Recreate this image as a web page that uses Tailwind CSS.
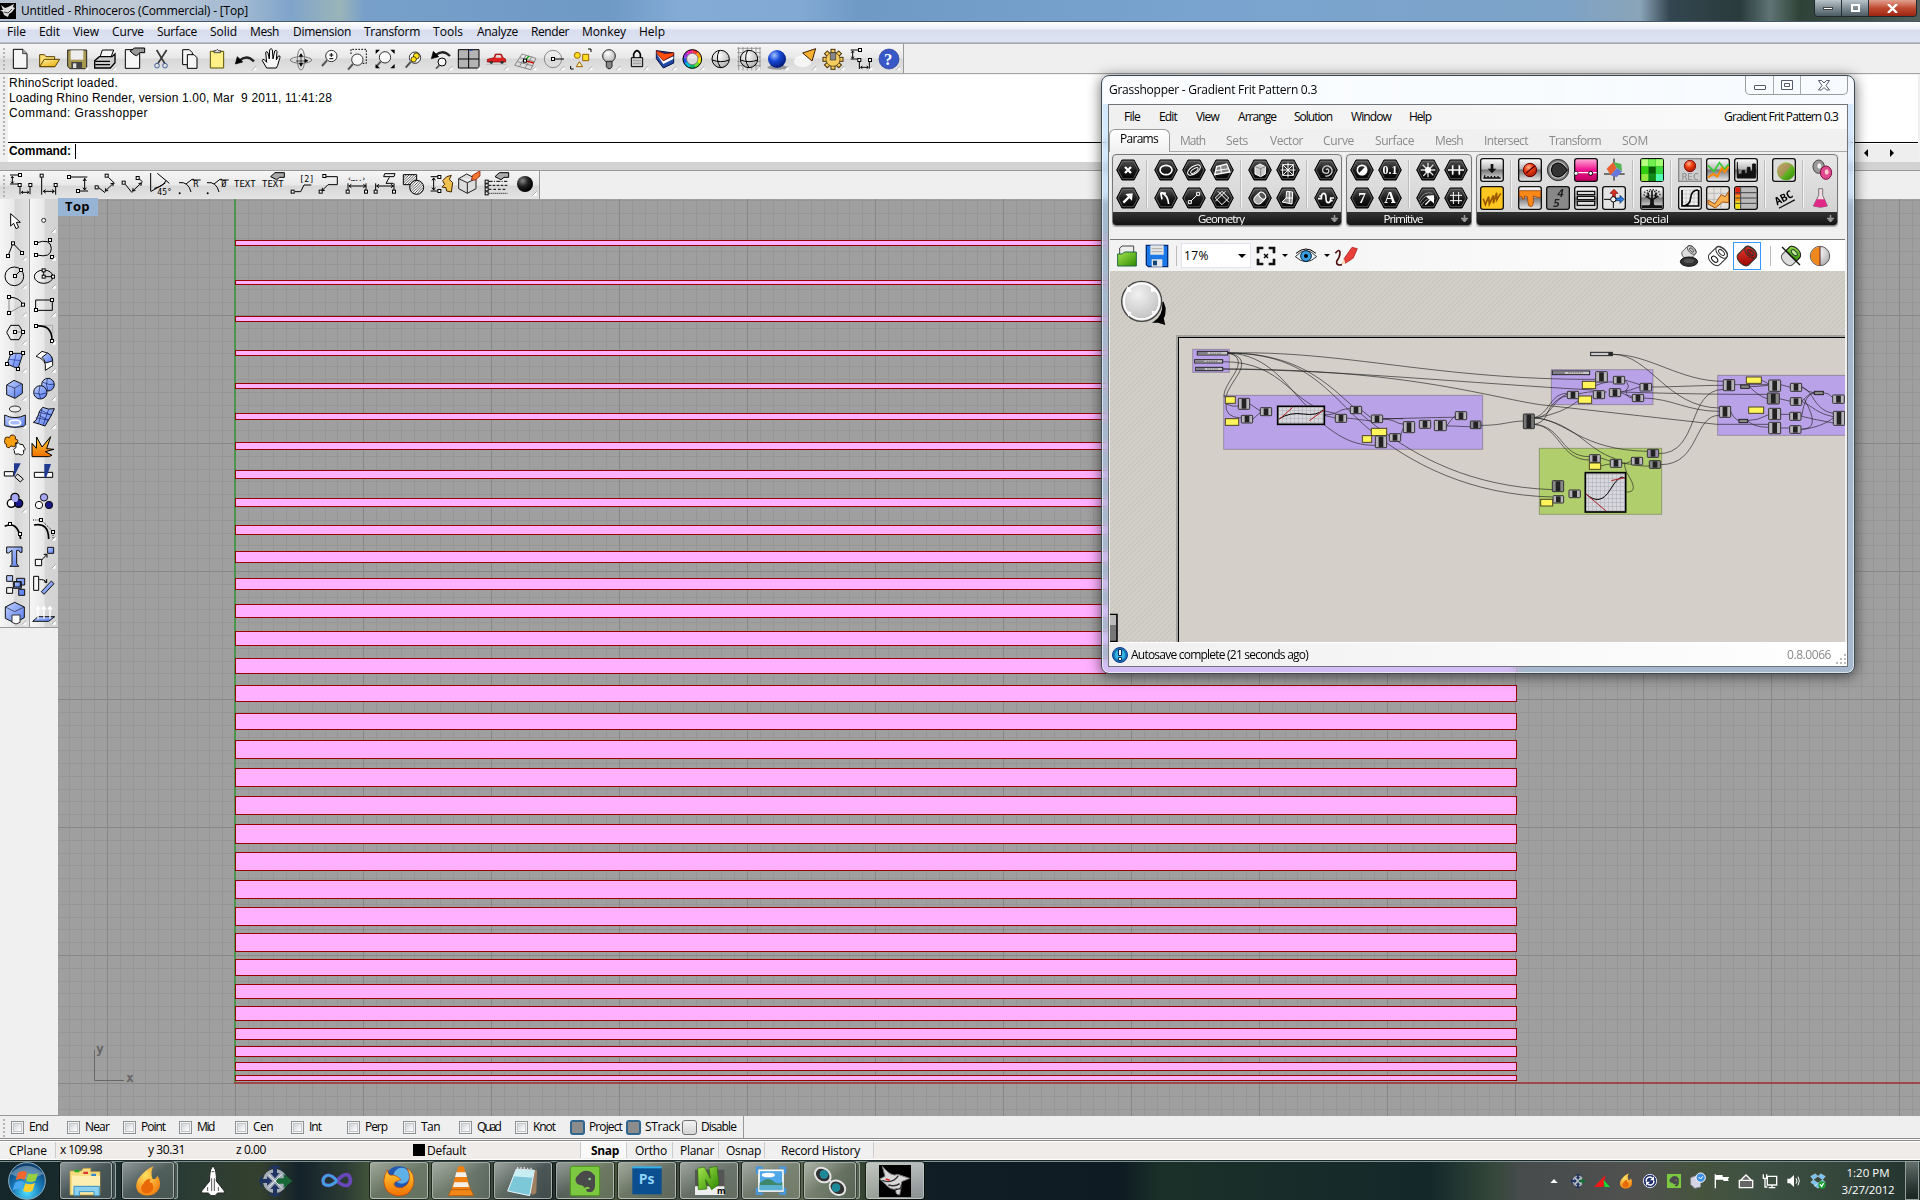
<!DOCTYPE html>
<html lang="en">
<head>
<meta charset="utf-8">
<title>Untitled - Rhinoceros (Commercial) - [Top]</title>
<script src="https://cdn.jsdelivr.net/npm/@tailwindcss/browser@4"></script>
</head>
<body class="w-[1920px] h-[1200px] overflow-hidden bg-[#efefef] font-['Open_Sans','Noto_Sans',sans-serif] text-[12px] text-black relative">
<svg class="absolute w-0 h-0"><defs>
<linearGradient id="gy" x2="1" y2="1"><stop offset="0" stop-color="#fff3a0"/><stop offset="1" stop-color="#e8a800"/></linearGradient>
<linearGradient id="gb" x2="1" y2="1"><stop offset="0" stop-color="#c4d2ff"/><stop offset="1" stop-color="#5278ee"/></linearGradient>
<linearGradient id="go" x2="0" y2="1"><stop offset="0" stop-color="#ffcf3a"/><stop offset="1" stop-color="#f07000"/></linearGradient>
<linearGradient id="hx" x2="0" y2="1"><stop offset="0" stop-color="#555"/><stop offset=".5" stop-color="#1c1c1c"/><stop offset="1" stop-color="#000"/></linearGradient>
<linearGradient id="gg" x2="0" y2="1"><stop offset="0" stop-color="#fff"/><stop offset=".45" stop-color="#bbb"/><stop offset=".5" stop-color="#777"/><stop offset="1" stop-color="#eee"/></linearGradient>
<linearGradient id="pk" x2="0" y2="1"><stop offset="0" stop-color="#ffb0d8"/><stop offset=".5" stop-color="#f01090"/><stop offset="1" stop-color="#c00060"/></linearGradient>
<radialGradient id="rb" cx=".35" cy=".3" r=".8"><stop offset="0" stop-color="#a0c4ff"/><stop offset=".4" stop-color="#1848d8"/><stop offset="1" stop-color="#001060"/></radialGradient>
<radialGradient id="rw" cx=".4" cy=".3" r=".8"><stop offset="0" stop-color="#fff"/><stop offset="1" stop-color="#a8a8a8"/></radialGradient>
<radialGradient id="rk" cx=".35" cy=".3" r=".7"><stop offset="0" stop-color="#888"/><stop offset=".5" stop-color="#222"/><stop offset="1" stop-color="#000"/></radialGradient>
<radialGradient id="rr" cx=".4" cy=".3" r=".8"><stop offset="0" stop-color="#ffb090"/><stop offset=".4" stop-color="#ee4010"/><stop offset="1" stop-color="#901000"/></radialGradient>
<radialGradient id="ro" cx=".4" cy=".3" r=".8"><stop offset="0" stop-color="#ffe060"/><stop offset="1" stop-color="#f07808"/></radialGradient>
<radialGradient id="rs" cx=".5" cy=".8" r=".8"><stop offset="0" stop-color="#50e0ff"/><stop offset=".5" stop-color="#1878b8"/><stop offset="1" stop-color="#0a3460"/></radialGradient>
<linearGradient id="rd" x2="1" y2="1"><stop offset="0" stop-color="#f04030"/><stop offset="1" stop-color="#900000"/></linearGradient>
<linearGradient id="gr" x2="1" y2="1"><stop offset="0" stop-color="#a8e850"/><stop offset="1" stop-color="#2c8800"/></linearGradient>
<pattern id="hatch" width="5" height="5" patternUnits="userSpaceOnUse"><rect width="5" height="5" fill="#d1cec7"/><path d="M-1 1L1 -1M0 5L5 0M4 6L6 4" stroke="#c6c3bb" stroke-width="1"/></pattern>
<pattern id="gp" width="12" height="12" patternUnits="userSpaceOnUse"><rect width="12" height="12" fill="#d6d6dc"/><path d="M0 0H12M0 0V12" stroke="#aaaab4" stroke-width="3"/></pattern>
<pattern id="diag" width="8" height="8" patternUnits="userSpaceOnUse"><rect width="8" height="8" fill="#fff"/><path d="M0 8L8 0M-2 2L2 -2M6 10L10 6" stroke="#000" stroke-width="2"/></pattern>
</defs></svg>

<div class="flex flex-col w-full h-full">
<!-- title bar -->
<header class="h-[21px] flex items-start bg-[linear-gradient(90deg,#b4c2d2_0px,#c0cad6_130px,#a3bad2_240px,#7fa4ca_290px,#9ab4b8_340px,#779fca_365px,#6f9ac6_610px,#84abd6_680px,#82a9d4_800px,#6f9ac6_860px,#7aa4d0_1200px,#7da3c8_1560px,#8aa4b8_1640px,#33454f_1670px,#2a3b3c_1740px,#5f7475_1770px,#2f4237_1800px,#51605c_1920px)]">
<svg class="w-4 h-4 mt-[3px]" viewBox="0 0 16 16"><path fill="#000" d="M0 0h16v16H0z"/><path fill="#ddd" d="M1 2l4 3 3-1 6-3-1 3 2 1-3 4-3 2-1 3-4-2-1-3-3-2 3 0z"/><path d="M4 9l4 1 4-4" stroke="#444" fill="none"/></svg>
<span class="ml-[5px] mt-[1px] leading-[19px] whitespace-pre" data-w="226">Untitled - Rhinoceros (Commercial) - [Top]</span>
<div class="ml-auto mr-[3px] flex h-[17px] border border-t-0 border-[#1e2a30] rounded-b-[4px] overflow-hidden divide-x divide-[#26333a]">
<div class="w-[27px] bg-gradient-to-b from-[#b9c3ca] to-[#4c5c62] flex justify-center items-center"><i class="w-[10px] h-[3px] bg-white border border-[#444]"></i></div>
<div class="w-[27px] bg-gradient-to-b from-[#b9c3ca] to-[#4c5c62] flex justify-center items-center"><i class="w-[9px] h-[8px] border-2 border-white"></i></div>
<div class="w-[47px] bg-gradient-to-b from-[#e0a090] via-[#c04a30] to-[#9c2410] flex justify-center items-center"><svg class="w-[11px] h-[9px]" viewBox="0 0 11 9"><path d="M1 0l9 9M10 0L1 9" stroke="#fff" stroke-width="2.4"/></svg></div>
</div>
</header>
<!-- menu -->
<nav class="h-[22px] border-t border-[#45566b] bg-[linear-gradient(180deg,#fff_0,#eceff8_7px,#d8deef_8px,#dde2f3_18px)] border-b border-b-[#b9bfd0] relative flex" id="menu"></nav>
<!-- main tools -->
<div class="h-[31px] border-t border-b border-[#a5a5a5] bg-[#efefef] flex">
<div class="flex w-[904px] border-r border-[#999] bg-[linear-gradient(180deg,#f6f6f6_0,#e8e8e8_14px,#d8d8d8_15px,#e4e4e4_29px)]">
<div class="w-[6px] flex flex-col gap-[2px] pt-[4px] pl-[3px] grip"></div><div id="tb1" class="flex"></div></div></div>
<!-- command history -->
<section class="h-[88px] bg-[#f0f0f0] flex pt-px">
<div class="w-[8px] pl-[3px] pt-[2px] flex flex-col gap-[2px] grip"></div>
<div class="w-[1910px] h-[87px] flex flex-col bg-white font-['Liberation_Sans',Arial,sans-serif]">
<div class="h-[68px] pl-px pt-px whitespace-pre leading-[15px] border-b border-black"><p><span data-w="108">RhinoScript loaded.</span></p><p><span data-w="322">Loading Rhino Render, version 1.00, Mar  9 2011, 11:41:28</span></p><p><span data-w="138">Command: Grasshopper</span></p></div>
<div class="flex h-[19px] items-start pt-px"><b class="pl-px leading-[14px] whitespace-pre"><span data-w="61">Command:</span></b><i class="ml-[4px] w-px h-[15px] bg-black"></i>
<div class="ml-auto w-[62px] h-[18px] bg-[#eee] flex items-center gap-[22px] pl-[8px]"><i class="border-y-4 border-y-transparent border-r-4 border-r-black"></i><i class="border-y-4 border-y-transparent border-l-4 border-l-black"></i></div></div>
</div></section>
<div class="h-[8px] bg-[#d2d2d2]"></div>
<!-- dimension tools -->
<div class="h-[29px] border-t border-[#999] bg-[#efefef] flex">
<div class="flex w-[540px] border-r border-[#999] bg-[linear-gradient(180deg,#f6f6f6_0,#e8e8e8_14px,#d8d8d8_15px,#e4e4e4_28px)]"><div class="w-[7px] flex flex-col gap-[2px] pt-[4px] pl-[3px] grip"></div><div id="tb2" class="flex"></div></div></div>
<!-- workspace -->
<main class="h-[917px] flex">
<aside class="w-[58px] flex flex-col bg-[#f0f0f0]">
<div class="h-[429px] flex border-b border-[#999]">
<div class="w-[30px] pt-[8px] border-r border-[#999] bg-[linear-gradient(90deg,#f6f6f6_0,#e8e8e8_14px,#d6d6d6_15px,#e2e2e2_29px)]"><div id="lt0" class="flex flex-col"></div></div>
<div class="w-[28px] pt-[8px] bg-[linear-gradient(90deg,#f6f6f6_0,#e8e8e8_14px,#d6d6d6_15px,#d2d2d2_28px)]"><div id="lt1" class="flex flex-col"></div></div>
</div><div class="mt-auto border-t border-[#999]"></div></aside>
<div class="w-[1862px] h-[917px] relative bg-[#9f9f9f]"><svg id="vp" class="block w-full h-full" viewBox="58 199 1862 917"></svg>
<b class="absolute left-0 -top-px w-[40px] h-[18px] bg-[#98b4d4] text-[13px] leading-[16px] pl-[7px]"><span data-w="24">Top</span></b></div>
</main>
<!-- object snaps -->
<div class="h-[23px] bg-[#efefef] border-b border-[#8c8c8c] flex"><div class="w-[744px] border-r border-[#999] flex items-center"><div class="w-[11px] h-full flex flex-col gap-[2px] pt-[3px] pl-[3px] grip"></div><div id="osnap" class="flex items-center"></div></div></div>
<div class="h-px bg-[#fafafa]"></div><div class="h-[2px] border-t border-[#8c8c8c] bg-white"></div>
<div class="h-[18px] bg-[#f0ecea] flex items-center whitespace-pre border-b border-white pb-px">
<span class="w-[56px] h-full border-r border-[#ccc] pl-[9px] bg-[#f0f0f0]"><span data-w="37">CPlane</span></span>
<span class="w-[88px] pl-[4px]"><span data-w="41">x 109.98</span></span><span class="w-[88px] pl-[4px]"><span data-w="36">y 30.31</span></span><span class="w-[177px] pl-[4px]"><span data-w="29">z 0.00</span></span>
<i class="ml-[4px] w-[12px] h-[12px] bg-black"></i><span class="pl-[2px] w-[156px] h-full border-r border-[#ccc]"><span data-w="38">Default</span></span>
<b class="w-[46px] h-full bg-[#fafafa] border-r border-[#ccc] pl-[10px]"><span data-w="27">Snap</span></b><span class="w-[46px] h-full border-r border-[#ccc] bg-[#f0f0f0] pl-[8px]"><span data-w="31">Ortho</span></span><span class="w-[46px] h-full border-r border-[#ccc] bg-[#f0f0f0] pl-[7px]"><span data-w="33">Planar</span></span><span class="w-[46px] h-full border-r border-[#ccc] bg-[#f0f0f0] pl-[7px]"><span data-w="34">Osnap</span></span><span class="w-[109px] h-full border-r border-[#ccc] bg-[#f0f0f0] pl-[16px]"><span data-w="78">Record History</span></span>
</div>
<!-- taskbar -->
<footer class="h-[40px] border-t border-[#1c2a2c] shadow-[inset_0_1px_0_#7c9090] flex items-center bg-[linear-gradient(90deg,#15262a_0,#1d2e30_110px,#2a3c34_190px,#34402e_260px,#14222a_300px,#2b3b33_345px,#42533a_370px,#4d5c4a_460px,#1e2b2c_545px,#49583c_600px,#3e4a40_700px,#5a6650_800px,#32412f_870px,#101d24_930px,#0e1b22_1120px,#1b3028_1160px,#14282a_1430px,#35483a_1495px,#474b4c_1520px,#50514f_1640px,#46543e_1700px,#3e5042_1760px,#33443a_1850px,#20302c_1920px)]">
<svg class="w-[40px] h-[38px] ml-[7px] mr-[11px]" viewBox="-60 -57 120 114"><circle r="55" fill="url(#rs)" stroke="#8fb4c8" stroke-width="3"/><path d="M-50-22Q0-70 50-22Q20-6 0-6T-50-22z" fill="#fff" opacity=".3"/><path d="M-27-25q14-9 27-1l-7 23q-13-8-27 1z" fill="#f06830"/><path d="M4-23q13 6 29-1l-7 23q-14 7-29 1z" fill="#98d040"/><path d="M-36 5q14-9 27-1l-7 23q-13-8-27 1z" fill="#48a8f0"/><path d="M-5 7q13 6 29-1l-7 23q-14 7-29 1z" fill="#ffd030"/></svg>
<div id="tasks" class="flex h-full"></div>
<div id="tray" class="ml-auto flex items-center"></div>
<div class="w-[74px] ml-px text-white text-center text-[11.5px] leading-[17px]"><p><span data-w="42">1:20 PM</span></p><p><span data-w="52">3/27/2012</span></p></div>
<i class="w-[14px] h-full border border-[#93a09a] bg-gradient-to-b from-white/30 to-black/20 mr-px"></i>
</footer>
</div>

<!-- Grasshopper window -->
<div class="absolute left-[1101px] top-[75px] w-[754px] h-[599px] rounded-[8px] border border-[#3f4a52] shadow-[0_2px_14px_rgba(0,0,0,.6),inset_0_0_0_1px_rgba(255,255,255,.6)] backdrop-blur-[4px] bg-[#b0d6fb]/50">
<div class="flex flex-col h-full">
<div class="h-[27px] mx-px mt-px rounded-t-[6px] flex bg-gradient-to-r from-white/90 via-white/85 to-white/80"><span class="ml-[6px] mt-[4px]" data-w="207">Grasshopper - Gradient Frit Pattern 0.3</span>
<div class="ml-auto mr-[5px] w-[103px] h-[19px] -mt-px border border-t-0 border-[#9b9b9b] rounded-b-[5px] flex divide-x divide-[#aaa]">
<div class="w-[28px] flex justify-center items-end pb-[4px]"><i class="w-[12px] h-[5px] border border-[#555a6a] rounded-[1px] bg-white"></i></div>
<div class="w-[27px] flex justify-center items-center"><svg class="w-[12px] h-[11px]" viewBox="0 0 12 11"><path d="M.5.5h11v9H.5zM3.5 3.5h5v3h-5z" fill="#fff" stroke="#555a6a"/></svg></div>
<div class="grow flex justify-center items-center"><svg class="w-[12px] h-[11px]" viewBox="0 0 12 11"><path d="M.5.5h3L6 3 8.500.5h3L8 5.500l3.500 4.500h-3L6 7.500 3.500 10h-3L4 5.500z" fill="#fff" stroke="#555a6a"/></svg></div>
</div></div>
<div class="mx-[6px] mb-[6px] grow border border-[#707478] bg-[#f0f0f0] flex flex-col overflow-hidden">
<div class="h-[24px] bg-gradient-to-r from-[#f0f0f0] to-[#fbfbfb] relative flex items-center" id="ghmenu"></div>
<div class="h-[23px] flex border-b border-[#a8a8a8] text-[#8a8a8a] items-end"><div class="w-[61px] h-[23px] -mb-px bg-gradient-to-b from-white to-[#f0f0f0] border border-b-0 border-[#999] rounded-t-[6px] text-black pl-[10px] leading-[18px]"><span data-w="37">Params</span></div><div id="ghtabs" class="flex h-[20px] grow"></div></div>
<div class="h-[87px] flex gap-[4px] pt-[2px] pl-[3px] bg-[#f0f0f0]" id="ribbon"></div>
<div class="h-[32px] border-t border-[#777] ml-px bg-gradient-to-r from-[#f2f2f2] to-white flex items-center mr-[2px]" id="ghtools"></div>
<svg id="canvas" class="ml-px mr-[2px] w-[735px] h-[371px] shrink-0" viewBox="1110 271 735 371"></svg>
<div class="h-[24px] pt-px shrink-0 bg-gradient-to-r from-[#f0f0f0] to-white border-t border-white flex items-center"><svg class="w-[16px] h-[16px] ml-[3px]" viewBox="0 0 16 16"><circle cx="8" cy="8" r="7.500" fill="#1478b8" stroke="#123a90"/><circle cx="8" cy="8" r="5" fill="#38b8e0"/><path d="M6.500 2.500h3v6h-3zM6.500 10.500h3v3h-3z" fill="#fff" stroke="#102a60"/></svg><span class="ml-[3px]" data-w="176">Autosave complete (21 seconds ago)</span><span class="ml-auto mr-[4px] text-[#8a8a8a]" data-w="43">0.8.0066</span><svg class="w-[11px] h-[11px] mt-[8px] mr-px" viewBox="0 0 11 11"><path d="M9 0h2v2H9zM9 4h2v2H9zM9 8h2v2H9zM5 4h2v2H5zM5 8h2v2H5zM1 8h2v2H1z" fill="#bbb"/></svg></div>
</div></div></div>

<script>
const $=id=>document.getElementById(id);
const svg=(cls,vb,s)=>`<svg class="${cls}" viewBox="${vb}">${s}</svg>`;
const K='fill="none" stroke="#000" stroke-width="3"', W='fill="#f6f6f6" stroke="#000" stroke-width="3"';
const p=(d,a=K)=>`<path d="${d}" ${a}/>`;
const q=(...a)=>{let s='';for(let i=0;i<a.length;i+=2)s+=`<rect x="${a[i]-4.5}" y="${a[i+1]-4.5}" width="9" height="9" fill="#fff" stroke="#000" stroke-width="3"/>`;return s};
const c=(x,y,r,a=K)=>`<circle cx="${x}" cy="${y}" r="${r}" ${a}/>`;
const el=(x,y,rx,ry,a=K)=>`<ellipse cx="${x}" cy="${y}" rx="${rx}" ry="${ry}" ${a}/>`;
const t=(x,y,s,str,a='')=>`<text x="${x}" y="${y}" font-size="${s}" font-family="DejaVu Sans Mono" ${a}>${str}</text>`;
const corner=(x,y)=>`<path d="M${x+13} ${y}V${y+13}H${x}z" fill="#fff"/><path d="M${x} ${y+13}L${x+13} ${y}" stroke="#888" stroke-width="2"/>`;
[6,20,6,5].forEach((n,k)=>{const g=document.querySelectorAll('.grip')[k];for(let i=0;i<n;i++)g.innerHTML+='<i class="block w-[2px] h-[2px] shrink-0 bg-[#b4b4b4]"></i>'});

/* menus: label, start, width */
function row(id,items,from){let x=from,h='';for(const[s,l,w]of items){h+=`<span class="shrink-0 whitespace-pre leading-[20px]" style="margin-left:${l-x}px;width:${w}px"><span data-w="${w}">${s}</span></span>`;x=l+w}$(id).innerHTML=h}
row('menu',[['File',7,18],['Edit',39,20],['View',73,25],['Curve',112,31],['Surface',157,39],['Solid',210,26],['Mesh',250,28],['Dimension',293,57],['Transform',364,55],['Tools',433,29],['Analyze',477,40],['Render',531,37],['Monkey',582,43],['Help',639,25]],0);
row('ghmenu',[['File',1124,15],['Edit',1159,17],['View',1196,22],['Arrange',1238,37],['Solution',1294,37],['Window',1351,39],['Help',1409,21],['Gradient Frit Pattern 0.3',1724,113]],1109);
row('ghtabs',[['Math',1180,24],['Sets',1226,21],['Vector',1270,32],['Curve',1323,30],['Surface',1375,38],['Mesh',1435,27],['Intersect',1484,43],['Transform',1549,51],['SOM',1622,25]],1170);

const dims=p('M1112 150h25M1112 177h28M1118 154v20M1114 158l4-5 4 5M1114 170l4 5 4-5M1138 183v24M1168 183v24M1142 202h22M1147 198l-5 4 5 4M1160 198l5 4-5 4')+q(1140,150,1138,180,1170,180);
const lens=(x,y)=>c(x,y,17,'fill="#fff" fill-opacity=".8" stroke="#333" stroke-width="3"')+p(`M${x-13} ${y+13}L${x-28} ${y+30}`,'stroke="#555" stroke-width="6" fill="none"');
const undo=p('M718 182Q740 162 762 184','fill="none" stroke="#222" stroke-width="7"')+p('M706 192L712 170 728 186z','fill="#000" stroke="#000" stroke-width="2"');
const gear=(x,y,r,f)=>{let s='';for(let i=0;i<8;i++)s+=`<rect x="${x-6}" y="${y-r}" width="12" height="${r}" transform="rotate(${i*45} ${x} ${y})" fill="${f}" stroke="#4a3000" stroke-width="3"/>`;return s+c(x,y,r*.7,`fill="${f}" stroke="#4a3000" stroke-width="2"`)};
const tb1=[
 p('M40 148h28l13 13v44H40z',W)+p('M68 148v13h13','fill="#aaa" stroke="#000" stroke-width="2"'),
 p('M119 200v-36h14l5 6h26v30z','fill="#ffe070" stroke="#5a4000" stroke-width="3"')+p('M119 200l14-22h46l-14 22z','fill="url(#gy)" stroke="#5a4000" stroke-width="3"'),
 p('M203 150h57v56h-50l-7-7z','fill="#a89850" stroke="#222" stroke-width="3"')+p('M212 151h38v28h-38z','fill="#eee"')+p('M214 186h32v20h-32z','fill="#444"')+p('M219 190h10v14h-10z','fill="#ddd"'),
 p('M299 174l8-24h34l-9 24z',W)+p('M284 182l14-12h38l9-8v26l-14 16h-47z','fill="#ccc" stroke="#000" stroke-width="4"')+p('M286 184h44M286 194h44','stroke="#000" stroke-width="4"'),
 p('M376 149h32l11 12v44h-43z',W)+p('M390 153l14-9h30v14h-14l-10 9-8-3z','fill="#999" stroke="#000" stroke-width="3"'),
 p('M470 150l24 40M500 150l-26 40','fill="none" stroke="#333" stroke-width="5"')+c(471,197,7,'fill="none" stroke="#4060a0" stroke-width="3"')+c(495,197,7,'fill="none" stroke="#4060a0" stroke-width="3"'),
 p('M548 149h20l9 9v36h-29z',W)+p('M562 164h20l9 9v32h-29z',W),
 p('M631 154h40v50h-40z','fill="#fff088" stroke="#5a5000" stroke-width="3"')+p('M642 158v-6h6q4-8 8 0h6v6z','fill="#ddd" stroke="#000" stroke-width="2"'),
 undo,
 p('M800 204l-13-22q0-6 6-3l7 8-3-30q4-6 7 2l4 18 1-28q5-6 8 0l2 28 5-24q5-5 7 1l-2 26 6-12q6-2 5 4l-7 24-4 8z',W),
 el(903,180,32,10,'fill="none" stroke="#777" stroke-width="3"')+el(903,178,11,32,'fill="none" stroke="#777" stroke-width="3"')+p('M903 164v30M888 183h30','stroke="#000" stroke-width="2"')+p('M898 169l5-8 5 8zM915 178l9 4-9 5zM898 190l5 9 5-9z','fill="#000" stroke="#000" stroke-width="2"'),
 lens(994,168)+p('M988 165h12M994 159v12M988 176h12'),
 lens(1072,179)+p('M1053 162v-14h46v42h-14','fill="none" stroke="#000" stroke-width="3" stroke-dasharray="5 4"'),
 lens(1155,172)+p('M1127 162v-13h13zM1184 162v-13h-13zM1184 192v13h-13zM1127 192v13h13z','fill="#000"'),
 lens(1245,173)+c(1249,168,9,'fill="#ffe010" stroke="#000" stroke-width="2"')+c(1241,178,8,'fill="#ffe010" stroke="#000" stroke-width="2"'),
 `<g transform="translate(588 -16)">${undo}</g>`+c(1326,186,12,W)+p('M1318 196l-10 10','stroke="#555" stroke-width="5"'),
 p('M1375 149h62v55h-62z','fill="#b4b4b4" stroke="#000" stroke-width="3"')+p('M1406 149v55M1375 177h62')+p('M1409 151h9','stroke="#2050d0" stroke-width="3"'),
 p('M22 186v-8l20-5 4-11h18l6 12 7 3v9z','fill="#e02020" stroke="#700" stroke-width="2"')+p('M49 165h12l4 8H46z','fill="#ddd"')+c(34,187,5,'fill="#333"')+c(66,187,5,'fill="#333"')+p('M18 193h62','stroke="#bbb" stroke-width="3"'),
 p('M104 196l22-34 42 13-16 34zM112 185l48 13M120 173l45 13M118 200l20-34M135 205l20-35','fill="none" stroke="#888" stroke-width="3"')+p('M135 182l12-14','stroke="#0a0" stroke-width="4"')+p('M135 182l26 7','stroke="#d00" stroke-width="4"')+q(135,182),
 c(219,177,26,'fill="none" stroke="#888" stroke-width="3"')+p('M222 177h30')+q(219,177),
 c(292,166,9,'fill="#ffe020" stroke="#a06000" stroke-width="3"')+p('M308 163h18v19h-18z','fill="#ffe020" stroke="#a06000" stroke-width="3"')+p('M298 185l10 15h-19z','fill="#fff0b0" stroke="#a06000" stroke-width="3"')+p('M324 147h9v9M272 198v9h9'),
 c(387,168,19,'fill="url(#rw)" stroke="#222" stroke-width="3"')+p('M379 184h17v16l-5 6h-7l-5-6z','fill="#888" stroke="#222" stroke-width="3"'),
 p('M461 174v-12q10-20 20 0v12','fill="none" stroke="#000" stroke-width="5"')+p('M454 173h34v27h-34z','fill="#ccc" stroke="#000" stroke-width="3"')+p('M459 182h24M459 190h24','stroke="#888" stroke-width="2"'),
 p('M529 152v24l21 28 31-15v-30z','fill="#2448a8" stroke="#001040" stroke-width="3"')+p('M530 162l20 30 30-15v-8l-30 14-20-28z','fill="#fff"')+p('M529 152l27 9 25-3v8l-31 16-19-20z','fill="#ff5010" stroke="#600" stroke-width="2"'),
 ['#f33','#f90','#ee0','#6d2','#0b6','#0bd','#25e','#93d','#e2a'].map((k,i)=>`<path d="M637 154a23 23 0 0 1 15 5.500" fill="none" stroke="${k}" stroke-width="11" transform="rotate(${i*40} 637 177)"/>`).join('')+c(637,177,28)+c(637,177,17,'fill="none" stroke="#555" stroke-width="2"'),
 c(722,177,26,'fill="url(#rw)" stroke="#000" stroke-width="3"')+p('M718 151q-14 26 4 52M697 180q25 10 51 0M722 151v0'),
 p('M772 145h70M772 158h70M772 171h70M772 184h70M772 197h70M776 141v70M789 141v70M802 141v70M815 141v70M828 141v70M840 141v70','fill="none" stroke="#777" stroke-width="2"')+c(807,177,26,'fill="url(#rw)" stroke="#000" stroke-width="3"')+p('M803 151q-14 26 4 52M782 180q25 10 51 0'),
 el(892,202,30,7,'fill="#999"')+c(891,177,27,'fill="url(#rb)"'),
 el(968,184,26,18,'fill="#fff" fill-opacity=".7"')+p('M968 159l39-13-11 37z','fill="#f8b030" stroke="#402000" stroke-width="3"'),
 gear(1059,178,30,'#f4cc60')+p('M1051 158h16v22h-16z','fill="#888" stroke="#333" stroke-width="2"'),
 dims,
 c(1227,177,30,'fill="#3858c8" stroke="#20358c" stroke-width="2"')+t(1212,196,50,'?','fill="#fff" font-weight="bold" style="font-family:Liberation Serif"')];
const has=new Set([2,3,8,15,16,17,18,19,20,21,22,23,24,26,27,28,29,30,31]);
$('tb1').innerHTML=tb1.map((s,i)=>{const x=18+84*i-(i>16?1440:0);return svg('w-[28px] h-[28px]',`${x} 132 84 84`,s+(has.has(i)?corner(x+66,198):''))}).join('');

const ar=(x,y,a)=>`<path d="M-7 -5L0 0L-7 5" ${K} transform="translate(${x} ${y}) rotate(${a})"/>`;
const hand='<path d="M812 530l13-12h28v14h-14l-9 7-8-4z" fill="#aaa" stroke="#000" stroke-width="3"/>';
const tb2=[
 p('M30 525h25M30 552h28M37 529v20M33 534l4-5 4 5M33 545l4 5 4-5M60 560v23M90 560v23M64 577h22M69 573l-5 4 5 4M82 573l5 4-5 4')+q(60,525,59,555,91,555),
 p('M125 532v52M167 560v24M130 574h33')+ar(163,574,0)+ar(130,574,180)+q(125,527,167,555),
 p('M212 531h50M254 534v36M240 573h24')+ar(254,570,90)+ar(254,536,-90)+q(207,531,234,573),
 p('M325 532l19 18M295 562l20 16M315 574l25-24')+ar(340,550,-45)+ar(316,573,135)+q(320,527,290,562),
 p('M376 553l20 25M418 537l10 9M397 574l28-26')+ar(424,549,-45)+ar(398,573,135)+q(371,548,413,534),
 p('M452 519v54M452 575l44-26M472 520l36 30M463 565q28-6 35-24')+t(472,584,24,'45°'),
 p('M537 548q28-4 36 28M558 552l18-14h6')+t(580,562,26,'R')+p('M578 540h24')+c(539,580,3,'fill="#000"'),
 p('M621 548q28-4 36 28M642 552l18-14h6')+t(664,562,26,'Ø')+p('M662 540h24')+c(623,580,3,'fill="#000"'),
 t(702,562,27,'TEXT'),t(786,562,27,'TEXT')+hand,
 t(898,545,25,'[2]')+p('M885 575h17l10-20h22')+q(878,575),
 p('M978 530h34v24h-28l-18 18')+ar(966,572,135)+q(973,528,962,575),
 t(1042,544,22,'‹…..›','textLength="56"')+p('M1044 550v20M1098 550v20M1047 558h50')+ar(1097,558,0)+ar(1047,558,180)+q(1043,575,1098,575),
 p('M1154 521h31l-3 9h-31zM1168 532l-10 18h22M1127 550v20M1182 550v20M1130 558h50')+ar(1180,558,0)+ar(1130,558,180)+q(1127,575,1182,575),
 p('M1210 524h40v30h-40z','fill="url(#diag)" stroke="#000" stroke-width="3"')+c(1250,562,21,'fill="url(#diag)" stroke="#000" stroke-width="3"'),
 p('M1292 530h24M1292 573h24M1301 533v37')+ar(1301,570,90)+ar(1301,534,-90)+q(1318,531,1318,573)+p('M1328 542l12-12 14-4-6 12 10 10-4 28-14-3-2-10-12-2 8-8z','fill="#f0c050" stroke="#402800" stroke-width="3"'),
 p('M1376 536l24-14 28 14v30l-26 14-26-14zM1376 536l26 12 26-12M1402 548v32','fill="#ddd" stroke="#222" stroke-width="3"')+p('M1414 540l4-14 22-14v16l-14 12z','fill="#f07830" stroke="#800" stroke-width="2"'),
 p('M26 544h56','fill="none" stroke="#000" stroke-width="3" stroke-dasharray="12 4 3 4"')+p('M26 556h56','fill="none" stroke="#000" stroke-width="3" stroke-dasharray="8 4"')+p('M26 568h56','fill="none" stroke="#000" stroke-width="3" stroke-dasharray="8 6"')+p('M26 580h56','fill="none" stroke="#000" stroke-width="3" stroke-dasharray="3 3"')+q(20,545,20,556,20,568,20,580)+`<g transform="translate(-767 0)">${hand}</g>`,
 c(135,552,24,'fill="url(#rk)"')+corner(157,574)];
$('tb2').innerHTML=tb2.map((s,i)=>svg('w-[28px] h-[28px]',`${21+84*i-(i>16?1440:0)} 513 84 84`,s)).join('');

const B='fill="url(#gb)" stroke="#111" stroke-width="3"';
const L0=[
 p('M32 56v37l9-8 7 16 8-4-7-15h12z','fill="#fff" stroke="#000" stroke-width="3"'),
 p('M24 183l15-38 27 28')+q(24,183,39,145,66,174),
 c(43,244,28)+p('M45 243l17-17')+q(45,243,63,225),
 p('M27 306q34 2 42 24')+p('M27 306v48l42-24','fill="none" stroke="#888" stroke-width="3"')+q(27,306,27,354,69,329),
 p('M20 412l12-21h25l12 21-12 22H32z')+p('M45 411h24','stroke="#888" stroke-width="3"')+q(45,411,69,411),
 p('M33 475h36l-15 46-33-14z',B)+p('M49 475l-10 40M27 493l35 4','stroke="#2038a0" stroke-width="2" fill="none"')+q(33,474,69,474,21,507,54,522),
 p('M20 570l22-14 25 11v28l-22 15-25-11z',B)+p('M20 570l24 9 22-12M44 579v30','fill="none" stroke="#223" stroke-width="2"'),
 el(45,642,17,9,'fill="#eee" stroke="#333" stroke-width="3"')+p('M14 660q31 16 62 0v32q-31 10-62 0z',B)+el(45,683,17,8,'fill="#a8bcff" stroke="#fff" stroke-width="5"'),
 p('M16 728q8-4 12 0 2-10 12-8 10 4 6 12 12 2 6 10-8 0-6 6 0 10-8 6-6-4-10 4-12 0-8-10-10 0-4-20z','fill="#f8a010" stroke="#402000" stroke-width="3"')+p('M48 746q8-6 12 2 12-2 12 8 8 10-2 10 4 12-6 14-10-6-16-2-8-2-4-10-8-4 4-10z','fill="#fff" stroke="#111" stroke-width="3"'),
 p('M13 830h28v13H13z','fill="#fff" stroke="#000" stroke-width="3"')+p('M42 805h20l-20 40z','fill="#203a90"')+p('M44 846l9-9 17 15-9 9z','fill="#ddd" stroke="#000" stroke-width="3"'),
 c(45,907,12,'fill="#a8a8f8" stroke="#000" stroke-width="4"')+c(34,925,12,'fill="#fff" stroke="#000" stroke-width="4"')+c(56,925,12,'fill="#181888" stroke="#000" stroke-width="4"')+c(45,911,10,'fill="#a8a8f8"'),
 p('M14 994q38-18 48 38','fill="none" stroke="#000" stroke-width="5"')+q(30,987,60,1017),
 p('M20 1056h46v16h-6l-4-6h-6v40l6 8H30l6-6v-42l-10 8h-6z',B),
 p('M50 1150h24v20H50zM40 1160h24v20H40zM20 1142h18v17H20zM56 1183h18v18H56z',B)+p('M43 1161h18v15H43z',B)+p('M20 1178h18v17H20z',W),
 p('M16 1236l28-14 29 14v32l-29 16-28-14z',B)+p('M16 1236l28 14 29-14','fill="none" stroke="#223" stroke-width="2"')+p('M36 1282v-22h24v22l-12 5z','fill="#fff" stroke="#333" stroke-width="3"')];
const L1=[
 c(131,76,6,'fill="#fff" stroke="#222" stroke-width="3"'),
 p('M108 144q44-16 46 16 0 30-44 20')+q(108,144,150,135,108,180,156,186),
 el(131,245,28,20)+p('M131 226v19h28')+q(131,226,131,245,159,245),
 p('M107 315h50v31h-50z')+q(156,315,108,345),
 p('M130 391h28v24','fill="none" stroke="#aaa" stroke-width="3"')+p('M110 393q46-4 46 42','fill="none" stroke="#000" stroke-width="5"')+q(108,393,156,438),
 p('M108 484l18-15 16 5q16 8 16 26v12l-22 14v-18q-6-18-28-24z','fill="#fff" stroke="#111" stroke-width="3"')+p('M126 487l17-13q14 8 15 24l-22 6q-2-10-10-17z',B),
 c(144,569,19,B)+c(121,592,20,B)+p('M129 562q20 10 34 6M142 551q-6 20 2 36M103 594q18 8 37 0M120 573q-8 20 2 38','fill="none" stroke="#102060" stroke-width="2"'),
 p('M100 682q10-4 14-20t14-25q16 8 35 4l-10 22-18 30q-16-6-35-11z',B)+p('M107 668l40 8M116 652l40 8M126 642l-10 44M146 643l-16 46M114 660l32 16M122 645l32 16','fill="none" stroke="#102070" stroke-width="2"'),
 p('M96 785v-40l13 15 1-34 16 30 26-31-12 36 22 2-26 7 20 11-10 4z','fill="url(#go)" stroke="#000" stroke-width="3"'),
 p('M103 832h55v15h-55z','fill="#fff" stroke="#000" stroke-width="3"')+p('M133 807h20l-14 40h-6z','fill="#203a90"'),
 c(132,907,11,'fill="#a8a8f8" stroke="#111" stroke-width="3"')+c(117,930,11,'fill="#fff" stroke="#111" stroke-width="3"')+c(147,930,11,'fill="#181888" stroke="#111" stroke-width="3"'),
 p('M102 990q44-8 44 42','fill="none" stroke="#000" stroke-width="5"')+p('M99 975h24l36 34v24','fill="none" stroke="#000" stroke-width="3" stroke-dasharray="3 4"')+q(123,975,159,1011),
 p('M124 1096l16-17M131 1078h10v10')+p('M106 1093h19v19h-19z',W)+p('M143 1057h18v18h-18z',B),
 p('M101 1144h15v42h-15z',W)+p('M118 1154q16-2 22 9M132 1160l8 3V1152')+p('M124 1190l30-32 8 8-30 32z',B),
 p('M98 1279l16-14h50l-18 14z',B)+p('M114 1271v-34M132 1271v-34M150 1271v-34M108 1243l6-8 6 8M126 1243l6-8 6 8M144 1243l6-8 6 8','fill="none" stroke="#fff" stroke-width="4"')];
const side=(L,x,skip)=>L.map((s,r)=>svg('w-[28px] h-[28px]',`${x} ${36+84*r} 84 84`,s+(skip.includes(r)?'':corner(x+(x?64:66),100+84*r)))).join('');
$('lt0').innerHTML=side(L0,0,[0,8,9,11,12,13]);$('lt1').innerHTML=side(L1,90,[8,9,10,13]);

/* model viewport */
let v='',mn='',mj='';
for(let n=-14;n<132;n++){const x=235+n*12.8;if(x<58)continue;(n%10?mn+=`M${Math.round(x)+.5} 199V1116`:mj+=`M${Math.round(x)+.5} 199V1116`)}
for(let n=-3;n<70;n++){const y=1083-n*12.8;(n%10?mn+=`M58 ${Math.round(y)+.5}H1920`:mj+=`M58 ${Math.round(y)+.5}H1920`)}
v=p(mn,'stroke="#969696" fill="none"')+p(mj,'stroke="#878787" fill="none"')+p('M235 199V1083','stroke="#4a964c" stroke-width="2"')+p('M234 1083H1920','stroke="#9c4848" stroke-width="2"');
[[240,246],[280,285],[316,322],[350,356],[383,389],[413,420],[442,450],[470,479],[498,507],[525,535],[551,563],[578,590],[604,618],[631,646],[658,674],[685,702],[713,730],[740,759],[768,787],[796,815],[824,844],[852,871],[880,899],[907,926],[933,952],[959,976],[984,999],[1006,1021],[1028,1040],[1046,1057],[1062,1071],[1075,1081]].forEach(([a,b])=>v+=`<rect x="235.500" y="${a+.5}" width="1281" height="${b-a-1}" fill="#ffb0ff" stroke="#960000"/>`);
v+=p('M94.500 1050V1080.500H124','stroke="#686868" fill="none"')+t(96,1053,13,'y','fill="#666" font-weight="bold"')+t(126,1082,13,'x','fill="#666" font-weight="bold"');
$('vp').innerHTML=v;

/* snaps */
$('osnap').innerHTML=['End:18','Near:23','Point:23','Mid:16','Cen:19','Int:11','Perp:21','Tan:18','Quad:22','Knot:21'].map(s=>{const[a,w]=s.split(':');return`<span class="w-[56px] flex items-center"><i class="w-[13px] h-[13px] border border-[#8e8f8f] bg-[#f4f4f4] p-px flex"><i class="grow border border-[#c4c8cc] bg-gradient-to-br from-[#cfd3d8] to-white"></i></i><span class="ml-[5px]" data-w="${w}">${a}</span></span>`}).join('')+['Project:32','STrack:34','Disable:34'].map((s,i)=>{const[a,w]=s.split(':');return`<span class="w-[56px] flex items-center -ml-px mr-px">${i<2?'<i class="w-[15px] h-[15px] border-2 border-[#2f6690] rounded-[3px] bg-[#8c8c8c]"></i>':'<i class="w-[15px] h-[15px] border border-[#707070] rounded-[3px] bg-gradient-to-b from-[#f4f4f4] to-[#d4d4d4]"></i>'}<span class="ml-[4px]" data-w="${w}">${a}</span></span>`}).join('');

/* ribbon, every icon centred on 0,0 */
const w='fill="none" stroke="#fff" stroke-width="5"',w3='fill="none" stroke="#fff" stroke-width="3"';
const hex=s=>`<path d="M-34 0L-18 -30H18L34 0L18 30H-18z" fill="url(#hx)" stroke="#000" stroke-width="3"/><path d="M-30 0L-16 -26H16L30 0L16 26H-16z" fill="none" stroke="#777" stroke-width="2"/>`+s;
const box=(s,f='url(#gg)')=>`<rect x="-34" y="-34" width="68" height="68" rx="7" fill="${f}" stroke="#111" stroke-width="4"/>`+s;
const T=(s,x,y,z)=>`<text x="${x}" y="${y}" font-size="${z}" font-weight="bold" font-family="Liberation Serif" text-anchor="middle" fill="#fff">${s}</text>`;
const G=[['Geometry',[[hex(p('M-9-9L9 9M9-9L-9 9','stroke="#fff" stroke-width="7"')),hex(p('M-14 14L6-6','stroke="#fff" stroke-width="7"')+p('M14-14L12 8-8-12z','fill="#fff"'))],0,
 [hex(el(0,0,18,14,w)),hex(p('M-16-16Q6-10 8 18M-16-16L-12 4M-16-16L0-14',w))],
 [hex(`<g transform="rotate(-35)">${el(0,0,22,11,w3)+el(0,2,13,5,w3)}</g>`),hex(p('M-12 12L12-12',w3)+p('M-17 8h9v9h-9zM8-17h9v9H8z','fill="#333" stroke="#fff" stroke-width="3"'))],
 [hex(p('M-22 14L-16-10 14-18 24 6z','fill="#888" stroke="#fff" stroke-width="4"')+p('M-18 2L20-4M-2 10L-4-12',w3)),hex(p('M0-20L20 0 0 20-20 0zM-12-20L20 12M-20 10L10-20',w3))],0,
 [hex(p('M-15-10L0-18 16-10V12L2 20-15 12z','fill="#ccc" stroke="#fff" stroke-width="3"')+p('M-15-10L2-4 16-10M2-4V20','fill="none" stroke="#666" stroke-width="2"')),hex(`<g transform="rotate(45)">${`<rect x="-13" y="-18" width="26" height="38" rx="12" fill="#aaa" stroke="#fff" stroke-width="3"/>`+el(0,-10,12,8,'fill="#555" stroke="#fff" stroke-width="3"')}</g>`)],
 [hex(p('M-16-16h32v32h-32zM-22 0h44M0-22V22M-16-16L16 16M16-16L-16 16',w3)),hex(p('M-4-20L14-18 12 18-18 12-6 0zM-6 0L14 0M4-18V14','fill="#888" stroke="#fff" stroke-width="3"'))],0,
 [hex(p('M0 0q4-6 8 0 2 10-8 10-12-2-10-12 4-12 16-10 14 4 12 18-6 14-20 12','fill="none" stroke="#ccc" stroke-width="4"')),hex(p('M-24 2h10q0-16 7-16t7 14 7 14 7-14h10M-20-6h8M12 8h8',w))]]],
 ['Primitive',[[hex(c(0,0,14,w)+p('M-11 11A15 15 0 0 0 11-11z','fill="#fff"')),hex(T('7',0,16,46))],[hex(T('0.1',0,12,36)),hex(T('A',0,16,48))],0,
 [hex(p('M0-22V22M-22 0H22M-16-16L16 16M16-16L-14 18','fill="none" stroke="#ddd" stroke-width="4"')+c(0,0,9,'fill="#fff"')),hex(p('M-26 6q14-28 40-20M-24 14q16-28 40-20M-20 22q18-28 40-20','fill="none" stroke="#888" stroke-width="3"')+p('M-8 20L8 4M16-6v18L-2-4z','fill="#fff" stroke="#fff" stroke-width="4"'))],
 [hex(p('M-24 0H24M-10-14V14M10-14V14',w)),hex(p('M-8-18V18M8-18V18M-18-8H18M-18 8H18',w3))]]],
 ['Special',[[box(p('M-26 24h52M-22 16v8M-12 18v8M-2 18v8M8 18v8M18 18v8','stroke="#111" stroke-width="4"')+p('M-4-18h8V-4h9L0 10-13-4h9z','fill="#111"')),box(p('M-26 2L-20 20-10-4-8 18 4-8 4 16 14-16 14 6 26-14','fill="none" stroke="#9a5800" stroke-width="5"'),'#ffc820')],0,
 [box(c(0,0,20,'fill="url(#rr)" stroke="#600" stroke-width="3"')+p('M-12 10L14-12','stroke="#500" stroke-width="4"')),box(p('M-32-22H32V-2Q22 0 18-4L10-6Q12 24 4 26-6 26-6 14L-8-4-16-6Q-16 6-22 4L-24-4-32-4z','fill="#f88818" stroke="#903000" stroke-width="2"'))],
 [c(0,0,32,'fill="#777" stroke="#333" stroke-width="3"')+c(0,0,26,'fill="#bbb"')+p('M-16-14Q0-28 16-14L28 0 16 14Q0 28-16 14-24 0-16-14z','fill="#333" stroke="#000" stroke-width="3"'),box(t(-2,-4,34,'4','fill="#222" font-style="italic" font-weight="bold"')+t(-14,28,34,'5','fill="#222" font-style="italic" font-weight="bold"'),'#888')],
 [box(p('M-32 8H32','stroke="#fff" stroke-width="4"')+c(-30,10,6,'fill="#fff" stroke="#000" stroke-width="2"')+c(14,10,6,'fill="#fff" stroke="#000" stroke-width="3"'),'url(#pk)'),box(p('M-26-20h52v10h-52zM-26-5h52V5h-52zM-26 10h52v12h-52z','fill="#ddd" stroke="#111" stroke-width="4"'))],
 [p('M-30 12H32M0-34V32')+p('M-22-4L-2-24 8-6-10 16z','fill="#e86030"')+p('M-2-24L22-18 24 4 8-6z','fill="#50b850"')+p('M-10 16L8-6 24 4 8 22z','fill="#6878d8"'),box(p('M0-26l12 12H4V4h-8v-18h-8z','fill="#e03020" stroke="#600" stroke-width="2"')+p('M30 4L18 16V8H0V0h18v-8z','fill="#2878e8" stroke="#024" stroke-width="2"')+c(-2,4,8,W)+p('M-30 4h20M-2 12v18'),'#e4e4e4')],0,
 [box([['#b8ff80',-32,-32],['#70f050',-10,-32],['#a0ff70',12,-32],['#30d010',-32,-10],['#085808',-10,-10],['#38d840',12,-10],['#90e840',-32,12],['#108818',-10,12],['#50ffb0',12,12]].map(a=>`<path d="M${a[1]} ${a[2]}h21v21h-21z" fill="${a[0]}"/>`).join(''),'#28b818'),box(p('M-3 26V4L-18-6M3 26V4L18-6M0 10V-22M-10 0L-12-16M10 0L12-16M-8 26L0 14 8 26','fill="none" stroke="#111" stroke-width="5"')+el(0,-12,24,13,'fill="none" stroke="#222" stroke-width="4" stroke-dasharray="4 5"')+el(0,-14,14,7,'fill="none" stroke="#222" stroke-width="4" stroke-dasharray="4 4"')+p('M-31 22H31V31H-31z','fill="#111"'))],0,
 [`<rect x="-34" y="-34" width="68" height="68" fill="#ccc" stroke="#888" stroke-width="4"/>`+c(0,-12,17,'fill="url(#rr)" stroke="#811" stroke-width="3"')+t(-25,29,28,'REC','fill="#888"'),box(p('M-24 24V-24H24V24zM-12-24V24M0-24V24M12-24V24M-24 0H24M-24-12H24M-24 12H24','fill="none" stroke="#bbb" stroke-width="2"')+p('M-24-24V24H26V-24M-24 24Q0 24 2 0T24-24','fill="none" stroke="#000" stroke-width="5"'),'#eee')],
 [box(p('M-30-14L-12 4 4-22 20-2 32-18','fill="none" stroke="#3c3" stroke-width="5"')+p('M-30 22L-14 12-2 20 12-6 20 6 32-10','fill="none" stroke="#f80" stroke-width="6"')),box(p('M-30-14H30M-30 4H30M-12-30V30M8-30V30','stroke="#aaa" stroke-width="2"')+p('M-30 6L-10 18 10-10 22-4 32-20V14L14 12-8 30-30 18z','fill="#f8b050" stroke="#a05010" stroke-width="3"'),'#e4e0dc')],
 [box(p('M-26-24V24H28V-18H20V4H12V-8H4V10H-4V2H-12V12H-20V24','fill="#111" stroke="#111" stroke-width="3"')),box(p('M-32-32h14v22h-14z','fill="#e02010"')+p('M-32-10h14v20h-14z','fill="#f89010"')+p('M-32 10h14v22h-14z','fill="#f0e010"')+p('M-16-32V32M-32-16H32M-32 0H32M-32 16H32','stroke="#444" stroke-width="3"'),'#bbb')],0,
 [box(c(6,4,27,'fill="url(#gr)"')+p('M-18-10Q0-28 24-16L-10 24Q-26 6-18-10z','fill="#e8608c" opacity=".45"'),'#ddd'),`<g transform="rotate(-28)">${t(-29,10,32,'ABC','font-weight="bold"')}${p('M-28 20H26','stroke="#111" stroke-width="4"')}</g>`],0,
 [el(-10,-10,17,20,'fill="#999" stroke="#444" stroke-width="3"')+el(-8,-12,6,8,'fill="#eee"')+el(12,8,17,20,'fill="#e04890" stroke="#801040" stroke-width="3"')+el(14,6,6,8,'fill="#fcc"'),p('M-10-28H2V-8L16 24Q-4 32-26 24L-10-8z','fill="#f4d8e4" stroke="#777" stroke-width="3"')+p('M-16 4H8L16 24Q-4 32-26 24z','fill="#e02888"')]]]];
$('ribbon').innerHTML=G.map(([n,cols])=>`<div class="h-[72px] border border-[#777] rounded-[4px] bg-gradient-to-b from-[#e6e6e6] to-[#cfcfcf] flex flex-col overflow-hidden shadow-[0_1px_1px_#aaa]"><div class="flex px-px h-[58px] pt-px">${cols.map(k=>k?`<div class="flex flex-col">${k.map(s=>svg('w-[28px] h-[28px]','-42 -42 84 84',s)).join('')}</div>`:'<div class="w-[10px] flex justify-center py-1"><i class="w-[2px] bg-[#bdbdbd] border-r border-[#f2f2f2]"></i></div>').join('')}</div><div class="h-[13px] bg-gradient-to-b from-[#333] to-[#151515] text-white text-[11.5px] leading-[13px] relative text-center pr-[12px]"><span data-w="${{Geometry:45,Primitive:38,Special:34}[n]}">${n}</span><svg class="absolute right-[3px] top-[3px] w-[7px] h-[7px]" viewBox="0 0 7 7"><path d="M3.500 0V6M0 3.500H7M1.500 4.500L3.500 6.500 5.500 4.500" stroke="#999" stroke-width="1.500" fill="none"/></svg></div></div>`).join('');

/* canvas toolbar */
const cyl=(f,g)=>`<g transform="rotate(45)"><rect x="-22" y="-28" width="44" height="56" rx="20" ry="13" fill="${f}" stroke="#333" stroke-width="3"/><ellipse cx="0" cy="-15" rx="21" ry="12" fill="${f}" stroke="#333" stroke-width="3"/><ellipse cx="0" cy="-15" rx="11" ry="6" fill="${g}" stroke="#333" stroke-width="3"/></g>`;
const ic=(l,s)=>`<svg class="w-[28px] h-[28px] shrink-0" style="margin-left:${l}px" viewBox="-42 -42 84 84">${s}</svg>`;
const dn='<i class="block border-x-[3px] border-x-transparent border-t-[3px] border-t-black shrink-0"></i>';
$('ghtools').innerHTML=ic(3,p('M-22 0V-24L-14-30H20V0z','fill="#eee" stroke="#444" stroke-width="3"')+p('M-28 30V-6h14l6-6h36v42z','fill="url(#gr)" stroke="#264" stroke-width="3"'))+ic(2,p('M-32-32H32V32H-26L-32 26z','fill="#1a78e8" stroke="#022a70" stroke-width="4"')+p('M-20-32H20V-4H-20zM-16 10H16V32H-16z','fill="#e4e4e4"')+p('M-12 14H0V28H-12z','fill="#147"')+p('M-16-22H16M-16-13H16','stroke="#aaa" stroke-width="3"'))+
'<i class="w-px h-[20px] bg-[#bbb] ml-[5px] mr-[4px] shrink-0"></i><div class="w-[70px] h-[25px] bg-white border border-[#e0e4ec] flex items-center justify-between pl-[2px] pr-[4px] shrink-0"><span data-w="24">17%</span><i class="border-x-4 border-x-transparent border-t-4 border-t-black"></i></div>'+
ic(1,p('M-24-8V-24H-8M8-24H24V-8M24 8V24H8M-8 24H-24V8','fill="none" stroke="#111" stroke-width="8"')+p('M-6-6L6 6M6-6L-6 6','stroke="#000" stroke-width="4"'))+`<div class="ml-[2px] mr-[4px]">${dn}</div>`+
ic(0,p('M-32 2Q0-34 32 2Q0 32-32 2z','fill="#e8f4fa" stroke="#333" stroke-width="3"')+c(0,0,16,'fill="#38a0e0" stroke="#024" stroke-width="3"')+c(0,0,6,'fill="#000"')+p('M-30-8Q0-34 30-8'))+`<div class="ml-[4px] mr-[2px]">${dn}</div>`+
ic(0,p('M-6 8L18-26 34-22 22 6-2 22z','fill="#e84038" stroke="#a01010" stroke-width="2"')+p('M-6 8L-2 22-16 26z','fill="#f8d8b0"')+p('M-32-8Q-20-24-18-10-18 2-28 16-30 30-12 26','fill="none" stroke="#501010" stroke-width="5"'))+
ic(315,`<g transform="translate(0 -10) scale(.75)">${cyl('#ddd','#bbb')}</g>`+el(0,17,26,14,'fill="#333" stroke="#111" stroke-width="3"')+el(0,15,15,6,'fill="#555"'))+ic(1,cyl('#fff','#fff')+`<g transform="rotate(45)">${el(0,14,11,7)}</g>`)+`<div class="w-[28px] h-[28px] border border-[#3399ff] ml-px shrink-0">${'<svg class="w-[26px] h-[26px]" viewBox="-38 -38 76 76">'+cyl('url(#rd)','#a01818')+'</svg>'}</div><i class="w-px h-[20px] bg-[#bbb] ml-[9px] shrink-0"></i>`+ic(6,`<g transform="rotate(45)"><rect x="-22" y="-28" width="44" height="56" rx="20" ry="13" fill="#ddd" stroke="#555" stroke-width="3"/><path d="M-22 0V-15A21 13 0 0 1 22 -15V0z" fill="url(#gr)" stroke="#222" stroke-width="3"/>${el(0,-14,11,6,'fill="#bfe890" stroke="#243" stroke-width="3"')}<path d="M-38 0H38" stroke="#111" stroke-width="4"/></g>`)+ic(1,c(0,0,29,'fill="url(#rw)" stroke="#555" stroke-width="3"')+p('M0-28A28 28 0 0 0 0 28z','fill="#f08820"')+p('M0-28V28','stroke="#622" stroke-width="3"'));

/* definition canvas */
const N=(x,y,ww,h,f='#b8b4bc')=>`<rect x="${x}" y="${y}" width="${ww}" height="${h}" rx="2" fill="${f}" stroke="#333" stroke-width="3"/><rect x="${x+ww/2-7}" y="${y+2}" width="14" height="${h-4}" fill="#222"/>`;
const Y=(x,y,ww,h)=>`<rect x="${x}" y="${y}" width="${ww}" height="${h}" fill="#fff45a" stroke="#4a4520" stroke-width="3"/>`;
const S=(x,y,ww,h)=>`<rect x="${x}" y="${y}" width="${ww}" height="${h}" fill="#c8c8c8" stroke="#222" stroke-width="3"/><rect x="${x+2}" y="${y+2}" width="${ww*.32}" height="${h-4}" fill="#808088"/><path d="M${x+ww*.42} ${y+h/2}h${ww*.4}" stroke="#777" stroke-width="3" stroke-dasharray="5 2"/>`;
const grp=(x,y,a,b,f)=>`<rect x="${x}" y="${y}" width="${a}" height="${b}" fill="${f}" stroke="#000" stroke-opacity=".25" stroke-width="3"/>`;
const wire=d=>p(d,'fill="none" stroke="#222" stroke-opacity=".75" stroke-width="2.600"');
const PU='#baa2e8';
/* right-hand coordinates are offset by 990 from the left-hand ones */
$('canvas').innerHTML=`<rect x="1110" y="271" width="735" height="371" fill="url(#hatch)"/><rect x="1178.500" y="337.500" width="700" height="340" fill="#000" opacity=".2" stroke="#000" stroke-width="5"/><rect x="1178.500" y="337.500" width="700" height="340" fill="#d4cfc8" stroke="#000"/>
<g transform="translate(1170 330) scale(.33333)">${grp(68,58,110,69,PU)+grp(161,196,777,162,PU)}
<g transform="translate(990 0)">${grp(154,119,305,105,PU)+grp(653,136,400,180,PU)+grp(118,355,367,198,'#b0ce6c')}</g>
${wire('M174 69C520 60 800 150 1277 148M158 117C500 120 900 160 1270 180M158 117C700 117 950 200 1110 224T1640 283H1800M174 69C420 70 480 200 600 300S900 495 1147 501M174 69C430 70 500 200 620 290S900 470 1147 479M174 69C300 74 350 170 412 230M158 95C350 95 360 230 496 250M174 69Q240 80 200 140T172 200M174 69Q228 80 188 140T170 205M168 222q20 10 40 6M168 222q-4 40 45 42M240 222l32 22M248 268l24-22M462 254C510 256 500 236 541 236M462 256l34 8M528 264C560 266 580 272 604 272M574 240l30 24M462 284C520 330 560 346 616 346M638 266h62M638 266C700 266 780 262 856 262M638 268C670 266 680 282 700 282M690 322q6-20 10-28M830 288q20-28 26-30M830 288C870 288 870 290 901 290M932 286C1000 286 1010 275 1060 273')}
<g transform="translate(990 0)">${wire('M103 263C150 250 150 190 202 190M103 265C160 260 160 200 202 198M103 265Q190 250 235 212M103 283C160 270 120 230 202 192M103 263C200 270 240 360 442 364M103 283C190 290 180 380 268 380M103 283C180 290 180 390 268 390M103 263C230 280 260 360 346 386M288 166q20-8 36-10M236 192C280 180 300 188 320 186M320 156h20M374 150q20 6 46 14M374 150q20 20 4 30 0 24 20 24M362 186q30-4 58-16M362 188q20 10 36 12M455 171C520 171 600 166 670 166M362 186C500 190 650 194 802 193M430 204C520 206 560 244 658 244M338 73C450 73 540 154 670 154M338 73C450 73 500 232 658 234M476 371C600 371 560 180 670 178M482 404C600 404 580 256 658 256M302 384q20 6 30 10M302 408q20-6 30-6M366 398q20 6 30-10M366 400C400 402 420 410 448 408M374 398q-2 10 6 30 40 60 0 58M704 164h100M784 150l22 12M748 170q20 0 56-4M748 170q30 30 54 36M842 164l30 8M838 206l34 8M842 253h28M842 294h28M692 244q10 24 26 28M742 272q30 0 64-18M742 272q20 20 64 20M905 171C940 180 940 240 1000 250M905 171q20 16 38 18M905 214q30-30 40-26M905 214C940 230 950 250 1000 260M905 259q40 10 95 20M905 259q10-70 38-70M905 298q60-6 95-34M905 298q60 0 8-90M970 188q15 0 30 16')}</g>
${S(82,64,91,11)+S(74,89,84,10)+S(77,112,81,10)+Y(166,200,30,20)+Y(166,266,40,20)+N(205,205,34,33)+N(214,256,34,23)+N(271,233,34,24)}
<rect x="323" y="229" width="140" height="54" fill="url(#gp)" stroke="#000" stroke-width="5"/>${p('M328 266Q360 246 400 252T460 240')}${p('M328 268L368 232M418 272L462 240','stroke="#b02020" stroke-width="3"')}
${N(496,253,34,24)+N(541,229,34,22)+N(604,255,34,23)+Y(604,295,46,22)+Y(577,317,28,20)+N(616,318,34,35)+N(658,311,34,23)+N(700,275,34,33)+N(748,271,34,24)+N(793,271,36,31)+N(856,245,34,24)+N(901,273,32,23,'#8a8694')}
<g transform="translate(990 0)">${N(70,252,33,44,'#777')+`<rect x="272" y="67" width="65" height="10" fill="#ccc" stroke="#222" stroke-width="3"/><path d="M325 67h12v10h-12z" fill="#222"/>`+S(157,123,112,11)+Y(247,154,40,22)+Y(235,198,40,22)+N(287,125,35,31)+N(340,139,34,23)+N(420,160,35,23)+N(202,184,34,22)+N(280,182,34,24)+N(328,176,34,24)+N(397,193,34,22)+Y(739,141,45,19)+Y(746,231,45,19)+N(670,149,34,33)+N(658,229,34,33)+N(806,150,36,34)+N(802,189,36,33,'#888')+N(806,235,36,34)+N(806,277,36,34)+N(871,160,34,24)+N(871,203,34,23)+N(869,247,34,24)+N(869,287,34,23)+N(998,195,35,25)+N(1000,244,34,42)}
<rect x="722" y="165" width="26" height="10" fill="#888" stroke="#222" stroke-width="3"/><rect x="717" y="268" width="26" height="10" fill="#888" stroke="#222" stroke-width="3"/><rect x="943" y="184" width="27" height="10" fill="#888" stroke="#222" stroke-width="3"/>
${N(442,358,34,24,'#998cae')+N(448,392,34,23,'#888')+N(394,382,34,23)+N(331,388,34,24)+N(268,374,33,23)+Y(268,399,34,19)+N(157,452,34,33,'#888')+N(159,497,32,22)+N(207,480,34,23)+Y(122,508,36,20)}
<rect x="256" y="428" width="121" height="118" fill="url(#gp)" stroke="#000" stroke-width="5"/>${p('M258 492Q300 530 330 480T374 444')+p('M258 492L318 543M334 452L374 443','stroke="#b02020" stroke-width="3"')}</g></g>
<g transform="translate(1095 70) scale(.33333)">${p('M178 756Q206 740 204 696L210 714Q210 740 204 744L208 762 190 756z','fill="#000" stroke="#000" stroke-width="4"')+c(140,694,60,'fill="#ddd" stroke="#444" stroke-width="4"')+c(140,694,53,'fill="url(#rw)" fill-opacity=".6" stroke="#fff" stroke-width="5"')+p('M92 664l6-16 14 18zM168 650l18 14-18 2zM96 724l14 2-10 14zM170 722l18 4-16 14z','fill="#fff"')}</g>
<rect x="1108" y="614.500" width="9" height="27" fill="#777" stroke="#000" stroke-width="1.500"/><rect x="1110" y="615" width="6" height="10" fill="#bbb"/>`;

/* taskbar */
const flame=p('M16-44Q-6-36-30-6-46 30-14 42 20 50 34 22 40 0 28-16 24-4 14-6 6-24 16-44z','fill="url(#ro)"')+p('M-14 8Q-6-8 8-6 0 6 12 6 22 24 8 34-12 42-20 26-22 14-14 8z','fill="#e86808"');
const hub=c(0,0,36,'fill="#a4acb8"')+p('M0-8L-14-24H-6V-40L-22-34Q0-60 22-34L6-40V-24H14zM0 8L-14 24H-6V40L-22 34Q0 60 22 34L6 40V24H14zM-8 0L-24-14V-6H-40L-34-22Q-60 0-34 22L-40 6H-24V14z','fill="#203464"')+p('M4-8H26V-22L52 0 26 22V8H4z','fill="#1a6838"')+p('M-20-20L20 20M20-20L-20 20','stroke="#dfe4ec" stroke-width="3"');
const ele=p('M-22-16Q-6-38 18-28L30-16V14Q30 30 16 34 2 34 4 24H14Q14 16 4 18-2 24-6 14-26 12-28 0-30-10-22-16z','fill="#4a4a4a"')+c(14,-6,4,'fill="#8c8"');
const I=[
 p('M-48-30h34l6-8h22v10h28V42h-90z','fill="#f6dc80" stroke="#c8a040" stroke-width="2"')+p('M-42-16h84v54h-84z','fill="#fbeeb0"')+p('M-34-34h14v8h-14z','fill="#2a2"')+p('M-8-28h14v7h-14z','fill="#d33"')+p('M16-22h14v7h-14z','fill="#38c"')+p('M-36 44V16h76v28H24V32H-20v12z','fill="#8cd0f0" stroke="#3a90c0" stroke-width="3"'),
 flame,
 p('M0-46Q10-36 10-14V0L34 30V36H14L6 44H-6L-14 36H-34V30L-10 0V-14Q-10-36 0-46z','fill="#fff" stroke="#222" stroke-width="3"')+p('M-4-28H4M-4-8V30M4-8V30M-16 18V30M16 18V30','stroke="#555" stroke-width="3"'),
 hub,
 p('M0 0Q-18-22-32-16-46-8-40 8-24 22 0 0 22-26 36-16 46 4 34 12 20 18 0 0z','fill="none" stroke="#6848b8" stroke-width="11"')+p('M0 0Q-18-22-32-16-46-8-40 8-24 22 0 0','fill="none" stroke="#40a0e0" stroke-width="8"'),
 c(0,0,44,'fill="#2458b0"')+c(8,-16,24,'fill="#60b0e8"')+p('M-34-34Q-56 0-36 30-10 54 24 40 52 18 42-18 36-32 24-38 38-14 26 8 10 26-8 18-20 10-10 2L6-4Q-4-16-18-18-34-14-34-34z','fill="url(#go)" stroke="#c04008" stroke-width="2"'),
 p('M-8-44H8L30 30H-30z','fill="#f08010"')+p('M-14-26H14L18-12H-18zM-20 4H20L24 18H-24z','fill="#f4f0ea"')+p('M-38 44L-30 26H30L38 44z','fill="#f08818" stroke="#b05000" stroke-width="2"'),
 p('M-14-34L42-32 40 36 28 42z','fill="#a08060"')+p('M-20-36L34-32 20 44-46 30z','fill="#7cc8d8" stroke="#e8f8ff" stroke-width="3"')+p('M-20-36L34-32 28-10-30-14z','fill="#c8eef4"')+p('M-16-42v10M-6-42v10M4-42v10M14-40v10M24-40v10','stroke="#ddd" stroke-width="4"'),
 `<rect x="-44" y="-44" width="88" height="88" rx="6" fill="#7cc840" stroke="#4a9818" stroke-width="3"/>`+ele,
 `<rect x="-44" y="-40" width="88" height="80" fill="#0c4f90"/><rect x="-44" y="-44" width="88" height="6" fill="#38b0e8"/>`+`<text x="-25" y="10" font-size="42" font-weight="bold" fill="#8cd4f8">Ps</text>`,
 p('M-42-34h88v76h-88z','fill="#555"')+p('M-42 16h88v26h-88z','fill="#eee"')+`<text x="24" y="40" font-size="26" font-weight="bold">m</text>`+p('M-34-38L-14-42 4-8 0-40 24-44 30 10 8 26-10-4-6 24-32 26z','fill="url(#gr)" stroke="#2a6808" stroke-width="2"'),
 `<rect x="-36" y="-32" width="72" height="62" fill="#50a8e8" stroke="#fff" stroke-width="5"/>`+p('M-34 6Q-10-14 6 0T34 2V26H-34z','fill="#3c8868"')+p('M-34 12H34V28H-34z','fill="#5cb0d0"')+el(-8,-18,20,7,'fill="#fff"')+p('M-42-22V-40H-24M24-40H42V-22M42 20V38H24M-24 38H-42V20','fill="none" stroke="#4898e0" stroke-width="7"'),
 `<g transform="rotate(35)">${p('M-20 0H20','stroke="#ccc" stroke-width="7"')+el(-28,-2,25,20,'fill="#333" stroke="#e4e4e4" stroke-width="6"')+el(30,4,25,20,'fill="#333" stroke="#e4e4e4" stroke-width="6"')}</g>`+c(-18,-20,13,'fill="#1c8898"')+c(18,20,13,'fill="#1c8898"'),
 p('M-48-48H48V48H-48z','fill="#000"')+p('M-38-44Q-10-10 8-20L44-8 20 2Q18 20 14 42-2 40 4 24-14 28-28 10L-46-6-30-14z','fill="#d8d8d8" stroke="#777" stroke-width="3"')+p('M-38-2Q-8 10 10-16M-20 12Q0 18 14 8M2 24Q18 28 20 10','fill="none" stroke="#333" stroke-width="4"')+p('M-28-6L-16-2','stroke="#d22" stroke-width="5"')];
const plain=[2,3,4],stack=[0,1,12];
$('tasks').innerHTML=I.map((s,i)=>{const g=svg('w-[48px] h-[38px]','-72 -57 144 114',s);if(plain.includes(i))return`<div class="w-[62px] flex justify-center items-center pr-px">${g}</div>`;
 const st=stack.includes(i);
 return`<div class="w-[62px] h-full flex pl-[2px] py-px"><div class="${st?'w-[52px]':'w-[58px]'} ${i==13?'bg-gradient-to-b from-white/70 to-white/50':'bg-gradient-to-br from-white/50 via-white/20 to-white/15'} border border-[#c2cac4]/70 rounded-[3px] flex justify-center items-center overflow-hidden shadow-[0_0_0_1px_#0008]">${g}</div>${st?'<div class="w-[4px] border-r border-y border-[#c2cac4]/70 bg-white/15 rounded-r-[3px]"></div>':''}</div>`}).join('');
const tr=[p('M-11 6L0-6 11 6z','fill="#fff"'),`<g transform="scale(.46)">${hub}</g>`,p('M-24 18L10-18 4 18z','fill="#f01818"')+p('M4-4L24 18H8z','fill="#18e030"'),`<g transform="scale(.52)">${flame}</g>`,
 c(0,0,20,'fill="#20306c" stroke="#dde" stroke-width="3"')+p('M-11 2A11 11 0 0 1 8-8M11-2A11 11 0 0 1-8 8','fill="none" stroke="#fff" stroke-width="4"')+p('M12-14V-2H0zM-12 14V2H0z','fill="#fff"'),`<g transform="scale(.48)"><rect x="-44" y="-44" width="88" height="88" fill="#7cc840"/>${ele}</g>`,
 p('M-22-10L-6-16 8-8V18L-10 22-22 10z','fill="#d4d4e4" stroke="#889" stroke-width="2"')+c(8,-10,14,'fill="#4090e0" stroke="#fff" stroke-width="3"')+p('M2-12L8-6 14-14','fill="none" stroke="#fff" stroke-width="3"'),
 p('M-20-20V22','stroke="#fff" stroke-width="4"')+p('M-18-18H2V-12L22-12Q14-2 22 0H4V-4H-18z','fill="#fff"'),
 p('M-20-2H20V20H-20zM-16-2L0-18 16-2','fill="#666" stroke="#fff" stroke-width="4"'),
 p('M-8-14H20V12H-8zM6 12V20M-4 20H16M-20-20V-8H-10V-20M-15-8V18H-8','fill="none" stroke="#fff" stroke-width="4"'),
 p('M-20-7H-12L0-18V18L-12 7H-20z','fill="#fff"')+p('M6-8Q12 0 6 8M12-13Q20 0 12 13','fill="none" stroke="#fff" stroke-width="3"'),
 p('M-22-14L-8-22 0-14-14-4zM22-14L8-22 0-14 14-4zM-22 4L-14-4 0 6-8 14zM22 4L14-4 0 6 8 14zM-12 14L0 8 12 14 0 22z','fill="#78c0f0" stroke="#fff" stroke-width="1"')+c(12,12,11,'fill="#18a030"')+p('M6 10L11 16 17 6','fill="none" stroke="#fff" stroke-width="4"')];
$('tray').innerHTML=tr.map(s=>svg('w-[24px] h-[24px]','-36 -36 72 72',s)).join('');

/* tune tracking so each label takes its given width */
function fit(){document.querySelectorAll('[data-w]').forEach(e=>{e.style.whiteSpace='pre';let ls=0;const r=document.createRange();for(let k=0;k<3;k++){e.style.letterSpacing=ls.toFixed(3)+'px';r.selectNodeContents(e);ls+=(+e.dataset.w+1-r.getBoundingClientRect().width)/e.textContent.length}e.style.letterSpacing=ls.toFixed(3)+'px'})}
fit();addEventListener('load',fit);document.fonts.ready.then(fit);requestAnimationFrame(()=>requestAnimationFrame(fit));
</script>
</body>
</html>
